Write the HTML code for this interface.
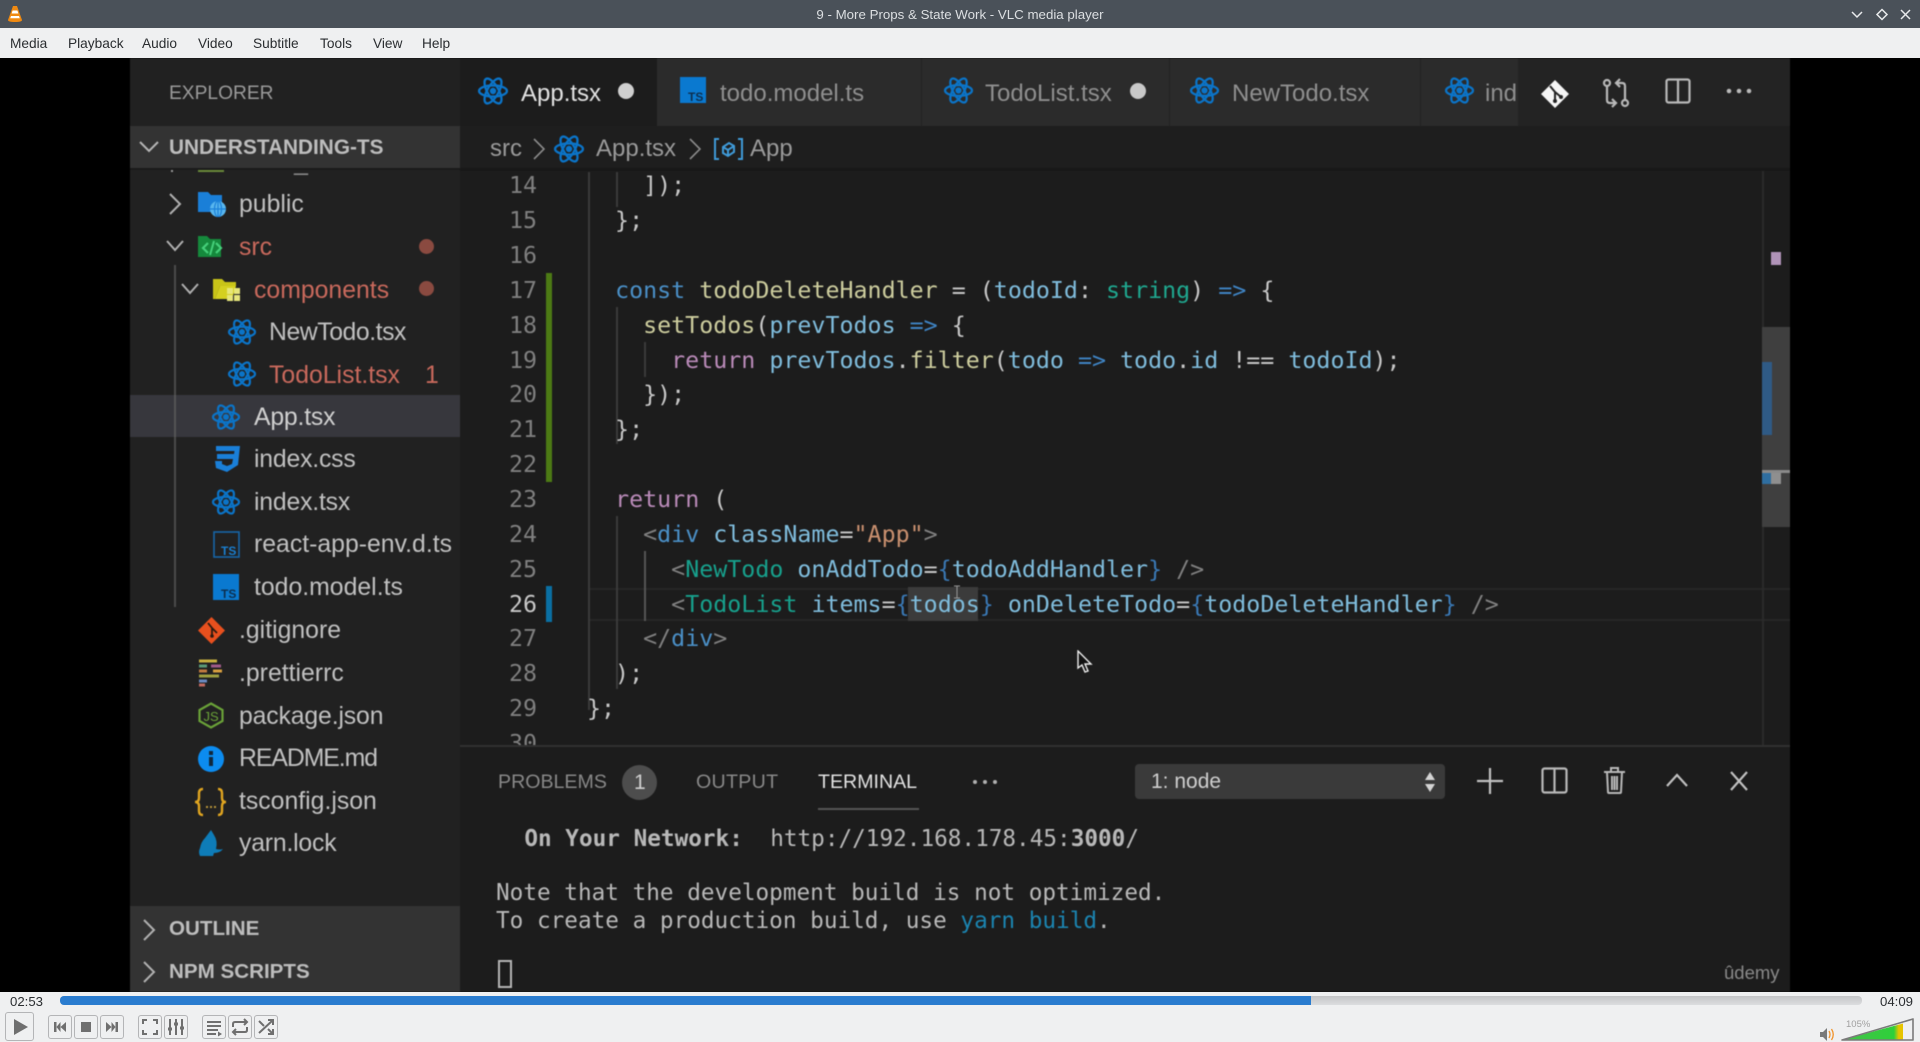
<!DOCTYPE html>
<html lang="en"><head><meta charset="utf-8"><title>9 - More Props &amp; State Work - VLC media player</title>
<style>
html,body{margin:0;padding:0;width:1920px;height:1042px;overflow:hidden;background:#eff0f1;font-family:"Liberation Sans",sans-serif}
div,span,svg{box-sizing:border-box}
.a,.t,.l,.n{position:absolute}
.t,.l,.n{white-space:pre;line-height:0}
#title{position:absolute;left:0;top:0;width:1920px;height:28px;background:#4a5159}
#menu{position:absolute;left:0;top:28px;width:1920px;height:30px;background:#eff0f1}
#menu .t{top:16px;font-size:13.7px;color:#2a2d30}
#video{position:absolute;left:0;top:58px;width:1920px;height:934px;background:#000;overflow:hidden}
#v{position:absolute;left:0;top:-58px;width:1920px;height:1042px;filter:blur(.55px)}
.s{font-size:24.8px;color:#c0c0c0}
.r{color:#c9695c}
.tab{font-size:24px;color:#8f8f8f}
.n{font:23.3px/0 "DejaVu Sans Mono",monospace;color:#7f7f7f;width:30px;left:507px;text-align:right}
.l{font:23.3px/0 "DejaVu Sans Mono",monospace;left:587px;color:#c8c8c8}
.k{color:#4a8fc6}.f{color:#cdcd9e}.p{color:#7fbcdc}.y{color:#1fa78f}.w{color:#3f84c4}.m{color:#b98ab8}
.g{color:#808080}.q{color:#17a08c}.b{color:#3a78b4}.o{color:#c9906f}
.ig{position:absolute;width:1.5px;background:#3a3a3a}
.term{font:22.7px/0 "DejaVu Sans Mono",monospace;color:#b8b8b8;left:496px}
.pan{font-size:19.6px;color:#888}
.btn{position:absolute;top:1015px;width:24px;height:24px;border:1px solid #b4b5b7;border-radius:3px;background:#eff0f1}
.btn svg{position:absolute;left:0;top:0;width:22px;height:22px}
</style></head><body>
<svg width="0" height="0" style="position:absolute"><defs>
<symbol id="re" viewBox="0 0 28 28"><g fill="none" stroke="#0b74c8" stroke-width="2.2"><ellipse cx="14" cy="14" rx="13" ry="5.2"/><ellipse cx="14" cy="14" rx="13" ry="5.2" transform="rotate(60 14 14)"/><ellipse cx="14" cy="14" rx="13" ry="5.2" transform="rotate(120 14 14)"/></g><circle cx="14" cy="14" r="3" fill="#0b74c8"/></symbol>
<symbol id="tsf" viewBox="0 0 26 26"><rect width="26" height="26" fill="#0a79d0"/><text x="8" y="24" font-family="Liberation Sans" font-size="12" font-weight="700" fill="#0d2f4f">TS</text></symbol>
</defs></svg>

<div id="title">
<svg class="a" style="left:7px;top:5px" width="16" height="18" viewBox="0 0 16 18"><path d="M6 1h4l5 14q0 2-7 2t-7-2z" fill="#f08a12"/><path d="M5.6 5.5h4.8l1 3H4.6zM4 11h8l.8 2.2H3.2z" fill="#fff"/></svg>
<span class="t" style="left:0;width:1920px;text-align:center;top:14.5px;font-size:13.3px;color:#dcdfe2">9 - More Props &amp; State Work - VLC media player</span>
<svg class="a" style="left:1850px;top:8px" width="66" height="13" viewBox="0 0 66 13" fill="none" stroke="#e8eaec" stroke-width="1.5"><path d="M2 4l5 5 5-5"/><path d="M32 1.5l5 5-5 5-5-5z"/><path d="M51 2l9 9M60 2l-9 9"/></svg>
</div>
<div id="menu">
<span class="t" style="left:10px">Media</span><span class="t" style="left:68px">Playback</span><span class="t" style="left:142px">Audio</span><span class="t" style="left:198px">Video</span><span class="t" style="left:253px">Subtitle</span><span class="t" style="left:320px">Tools</span><span class="t" style="left:373px">View</span><span class="t" style="left:422px">Help</span>
</div>

<div id="video"><div id="v">
<!-- backgrounds -->
<div class="a" style="left:130px;top:58px;width:1660px;height:934px;background:#1c1c1c"></div>
<div class="a" style="left:130px;top:58px;width:330px;height:934px;background:#212121"></div>
<div class="a" style="left:460px;top:58px;width:1330px;height:68px;background:#232323"></div>
<div class="a" style="left:460px;top:58px;width:197px;height:68px;background:#1c1c1c"></div>
<div class="a" style="left:657px;top:58px;width:264px;height:68px;background:#2b2b2b"></div>
<div class="a" style="left:922px;top:58px;width:247px;height:68px;background:#2b2b2b"></div>
<div class="a" style="left:1170px;top:58px;width:250px;height:68px;background:#2b2b2b"></div>
<div class="a" style="left:1421px;top:58px;width:97px;height:68px;background:#2b2b2b"></div>
<div class="a" style="left:460px;top:126px;width:1330px;height:43px;background:#1e1e1e"></div>
<div class="a" style="left:460px;top:168px;width:1330px;height:3px;background:#181818"></div>

<!-- explorer -->
<span class="t" style="left:169px;top:94px;font-size:19.2px;color:#9a9a9a">EXPLORER</span>
<div class="a" style="left:130px;top:169px;width:330px;height:7px;overflow:hidden">
<span class="t s" style="left:109px;top:-6px;color:#8a8a8a">node_modules</span>
<div class="a" style="left:68px;top:0;width:26px;height:3px;background:#6a8a3a"></div>
<div class="a" style="left:41px;top:0;width:2px;height:3px;background:#999"></div>
</div>
<div class="a" style="left:130px;top:126px;width:330px;height:42px;background:#333"></div>
<div class="a" style="left:130px;top:168px;width:330px;height:2px;background:#1a1a1a"></div>
<svg class="a" style="left:138px;top:139px" width="22" height="16" viewBox="0 0 22 16" fill="none" stroke="#b5b5b5" stroke-width="2"><path d="M2 3l9 9 9-9"/></svg>
<span class="t" style="left:169px;top:148px;font-size:20.8px;font-weight:700;color:#bdbdbd">UNDERSTANDING-TS</span>

<div class="a" style="left:174px;top:265px;width:1.5px;height:342px;background:#4a4a4a"></div>
<div class="a" style="left:130px;top:395px;width:330px;height:42px;background:#37373d"></div>
<div class="a" style="left:174px;top:395px;width:1.5px;height:42px;background:#555"></div>

<svg class="a" style="left:168px;top:192px" width="14" height="24" viewBox="0 0 14 24" fill="none" stroke="#b0b0b0" stroke-width="2"><path d="M2 2l10 10L2 22"/></svg>
<svg class="a" style="left:198px;top:191px" width="28" height="26" viewBox="0 0 28 26"><path d="M0 1h10l3 3h11v17H0z" fill="#1a7fd8"/><circle cx="20" cy="18" r="8" fill="#58b6ee"/><path d="M12 18h16M20 10v16" stroke="#1a7fd8" stroke-width="1.2"/><ellipse cx="20" cy="18" rx="3.5" ry="8" fill="none" stroke="#1a7fd8" stroke-width="1.2"/></svg>
<span class="t s" style="left:239px;top:205px">public</span>

<svg class="a" style="left:165px;top:239px" width="20" height="14" viewBox="0 0 20 14" fill="none" stroke="#b0b0b0" stroke-width="2"><path d="M2 2l8 9 8-9"/></svg>
<svg class="a" style="left:198px;top:235px" width="28" height="24" viewBox="0 0 28 24"><path d="M0 1h9l3 3h11v18H0z" fill="#15893c"/><path d="M10 18l-5-5 5-5M18 18l5-5-5-5" fill="none" stroke="#45d07a" stroke-width="2.2"/><path d="M16 6l-4 14" stroke="#45d07a" stroke-width="2"/></svg>
<span class="t s r" style="left:239px;top:248px">src</span>
<div class="a" style="left:419px;top:239px;width:15px;height:15px;border-radius:50%;background:#8a4a40"></div>

<svg class="a" style="left:180px;top:282px" width="20" height="14" viewBox="0 0 20 14" fill="none" stroke="#b0b0b0" stroke-width="2"><path d="M2 2l8 9 8-9"/></svg>
<svg class="a" style="left:213px;top:278px" width="29" height="24" viewBox="0 0 29 24"><path d="M0 1h9l3 3h11v4H7L2 21H0z" fill="#c8c418"/><path d="M7 8h16l-4 13H2z" fill="#d4d020"/><rect x="14" y="10" width="6" height="6" fill="#e6e67a"/><rect x="21" y="10" width="6" height="6" fill="#e6e67a"/><rect x="14" y="17" width="6" height="6" fill="#e6e67a"/><rect x="21" y="17" width="6" height="6" fill="#e6e67a"/></svg>
<span class="t s r" style="left:254px;top:291px">components</span>
<div class="a" style="left:419px;top:281px;width:15px;height:15px;border-radius:50%;background:#8a4a40"></div>

<svg class="a" style="left:228px;top:318px" width="28" height="28"><use href="#re"/></svg>
<span class="t s" style="left:269px;top:333px;letter-spacing:-.45px">NewTodo.tsx</span>
<svg class="a" style="left:228px;top:360px" width="28" height="28"><use href="#re"/></svg>
<span class="t s r" style="left:269px;top:376px">TodoList.tsx</span>
<span class="t s r" style="left:425px;top:376px">1</span>
<svg class="a" style="left:212px;top:403px" width="28" height="28"><use href="#re"/></svg>
<span class="t s" style="left:254px;top:418px;color:#d0d0d0;letter-spacing:-.2px">App.tsx</span>
<svg class="a" style="left:213px;top:446px" width="27" height="26" viewBox="0 0 27 26"><path d="M3 0h24l-2 19-11 7-11-4-1-7h7v3l5 2 5-2 1-5H4V8h17l.5-3H3z" fill="#1a7fd8"/></svg>
<span class="t s" style="left:254px;top:460px;letter-spacing:-.2px">index.css</span>
<svg class="a" style="left:212px;top:488px" width="28" height="28"><use href="#re"/></svg>
<span class="t s" style="left:254px;top:503px;letter-spacing:-.2px">index.tsx</span>
<svg class="a" style="left:213px;top:531px" width="27" height="27" viewBox="0 0 27 27"><rect x="1" y="1" width="25" height="25" fill="none" stroke="#1666a8" stroke-width="1.6"/><text x="8" y="24" font-family="Liberation Sans" font-size="12" font-weight="700" fill="#1a7fd0">TS</text></svg>
<span class="t s" style="left:254px;top:545px">react-app-env.d.ts</span>
<svg class="a" style="left:213px;top:574px" width="26" height="26"><use href="#tsf"/></svg>
<span class="t s" style="left:254px;top:588px">todo.model.ts</span>
<svg class="a" style="left:198px;top:617px" width="27" height="27" viewBox="0 0 27 27"><path d="M13.5 0L27 13.500 13.500 27 0 13.500z" fill="#e8501e"/><path d="M10 6l4 5v8M14 11l5 5" stroke="#2a1a10" stroke-width="1.8" fill="none"/><circle cx="14" cy="19" r="1.8" fill="#2a1a10"/></svg>
<span class="t s" style="left:239px;top:631px">.gitignore</span>
<svg class="a" style="left:199px;top:659px" width="25" height="28" viewBox="0 0 25 28"><g fill="none" stroke-width="3"><path d="M0 2h18" stroke="#c8b040"/><path d="M0 7h8" stroke="#5a9a78"/><path d="M12 7h10" stroke="#a05a8a"/><path d="M0 12h8" stroke="#c07a40"/><path d="M14 12h9" stroke="#d8a040"/><path d="M0 17h20" stroke="#a0a040"/><path d="M0 22h8" stroke="#6a8ac0"/><path d="M0 26h6" stroke="#c06a60"/></g></svg>
<span class="t s" style="left:239px;top:674px">.prettierrc</span>
<svg class="a" style="left:198px;top:702px" width="26" height="27" viewBox="0 0 26 27"><path d="M13 1.500L24.500 8v11L13 25.500 1.500 19V8z" fill="none" stroke="#6aa238" stroke-width="2.2"/><text x="5.5" y="19" font-family="Liberation Sans" font-size="13" fill="#6aa238">JS</text></svg>
<span class="t s" style="left:239px;top:717px;letter-spacing:-.15px">package.json</span>
<div class="a" style="left:198px;top:746px;width:26px;height:26px;border-radius:50%;background:#0c8cf0"></div>
<div class="a" style="left:209px;top:751px;width:4px;height:4px;background:#10283c"></div>
<div class="a" style="left:209px;top:757px;width:4px;height:9px;background:#10283c"></div>
<span class="t s" style="left:239px;top:759px;letter-spacing:-1.05px">README.md</span>
<svg class="a" style="left:194px;top:787px" width="33" height="30" viewBox="0 0 33 30" fill="none" stroke="#e0a520" stroke-width="2.4"><path d="M9 2Q5 2 5 6v5q0 4-4 4 4 0 4 4v5q0 4 4 4M24 2q4 0 4 4v5q0 4 4 4-4 0-4 4v5q0 4-4 4"/><path d="M12 20h2M16 20h2M20 20h2" stroke="#b8963a" stroke-width="2"/></svg>
<span class="t s" style="left:239px;top:802px">tsconfig.json</span>
<svg class="a" style="left:198px;top:830px" width="26" height="28" viewBox="0 0 26 28"><path d="M13 0l3 5q4 6 2 14 4 1 7 0-3 4-9 4l-1 3H2q-2-4 0-8 1-6 5-10z" fill="#0e7cb8"/></svg>
<span class="t s" style="left:239px;top:844px;letter-spacing:-.2px">yarn.lock</span>

<div class="a" style="left:130px;top:906px;width:330px;height:86px;background:#333"></div>
<svg class="a" style="left:142px;top:918px" width="14" height="24" viewBox="0 0 14 24" fill="none" stroke="#b0b0b0" stroke-width="2"><path d="M2 2l10 10L2 22"/></svg>
<span class="t" style="left:169px;top:929px;font-size:20.6px;font-weight:700;color:#bdbdbd">OUTLINE</span>
<svg class="a" style="left:142px;top:960px" width="14" height="24" viewBox="0 0 14 24" fill="none" stroke="#b0b0b0" stroke-width="2"><path d="M2 2l10 10L2 22"/></svg>
<span class="t" style="left:169px;top:972px;font-size:20.6px;font-weight:700;color:#bdbdbd">NPM SCRIPTS</span>

<!-- tabs -->
<svg class="a" style="left:478px;top:76px" width="30" height="30"><use href="#re"/></svg>
<span class="t tab" style="left:521px;top:94px;color:#e2e2e2">App.tsx</span>
<div class="a" style="left:618px;top:83px;width:16px;height:16px;border-radius:50%;background:#cfcfcf"></div>
<svg class="a" style="left:680px;top:77px" width="26" height="26"><use href="#tsf"/></svg>
<span class="t tab" style="left:720px;top:94px">todo.model.ts</span>
<svg class="a" style="left:944px;top:76px" width="29" height="29"><use href="#re"/></svg>
<span class="t tab" style="left:985px;top:94px">TodoList.tsx</span>
<div class="a" style="left:1130px;top:83px;width:16px;height:16px;border-radius:50%;background:#c8c8c8"></div>
<svg class="a" style="left:1190px;top:76px" width="29" height="29"><use href="#re"/></svg>
<span class="t tab" style="left:1232px;top:94px">NewTodo.tsx</span>
<svg class="a" style="left:1445px;top:76px" width="29" height="29"><use href="#re"/></svg>
<div class="a" style="left:1480px;top:70px;width:38px;height:46px;overflow:hidden"><span class="t tab" style="left:5px;top:24px">ind</span></div>

<svg class="a" style="left:1541px;top:80px" width="28" height="28" viewBox="0 0 28 28"><path d="M14 0l14 14-14 14L0 14z" fill="#f5f5f5"/><path d="M9 6l5 6v9M14 12l6 5" stroke="#222" stroke-width="2" fill="none"/><circle cx="14" cy="21" r="2" fill="#222"/><circle cx="20" cy="17" r="2" fill="#222"/></svg>
<svg class="a" style="left:1602px;top:78px" width="28" height="30" viewBox="0 0 28 30" fill="none" stroke="#b8b8b8" stroke-width="2.2"><circle cx="5" cy="5" r="3"/><path d="M5 8v14q0 3 3 3h5M10 21l4 4-4 4"/><circle cx="23" cy="25" r="3"/><path d="M23 22V8q0-3-3-3h-5M18 1l-4 4 4 4"/></svg>
<svg class="a" style="left:1665px;top:78px" width="26" height="26" viewBox="0 0 26 26" fill="none" stroke="#b8b8b8" stroke-width="2.2"><rect x="1.5" y="1.5" width="23" height="23" rx="2"/><path d="M13 2v22"/></svg>
<svg class="a" style="left:1726px;top:88px" width="26" height="6" viewBox="0 0 26 6" fill="#b8b8b8"><circle cx="3" cy="3" r="2.3"/><circle cx="13" cy="3" r="2.3"/><circle cx="23" cy="3" r="2.3"/></svg>

<!-- breadcrumb -->
<span class="t s" style="left:490px;top:149px;font-size:24px;color:#9a9a9a">src</span>
<svg class="a" style="left:533px;top:137px" width="12" height="24" viewBox="0 0 12 24" fill="none" stroke="#8a8a8a" stroke-width="1.6"><path d="M1 2l10 10L1 22"/></svg>
<svg class="a" style="left:554px;top:134px" width="30" height="30"><use href="#re"/></svg>
<span class="t s" style="left:596px;top:149px;font-size:24px;color:#9a9a9a">App.tsx</span>
<svg class="a" style="left:689px;top:137px" width="12" height="24" viewBox="0 0 12 24" fill="none" stroke="#8a8a8a" stroke-width="1.6"><path d="M1 2l10 10L1 22"/></svg>
<svg class="a" style="left:714px;top:138px" width="29" height="22" viewBox="0 0 29 22" fill="none" stroke="#3f9ad8" stroke-width="2"><path d="M5 1H1v20h4M24 1h4v20h-4"/><path d="M9 9l6-4 5 3v6l-6 4-5-3z"/><path d="M9 9l5 3 6-4M14 12v6"/></svg>
<span class="t s" style="left:750px;top:149px;font-size:24px;color:#9a9a9a">App</span>

<!-- editor -->
<div class="a" style="left:0;top:0;width:1920px;height:1042px;clip-path:inset(171px 0 297px 0)">
<div class="a" style="left:590px;top:588px;width:1200px;height:33px;border-top:2px solid #272727;border-bottom:2px solid #272727"></div>
<div class="ig" style="left:588px;top:172px;height:538px"></div>
<div class="ig" style="left:616px;top:172px;height:35px"></div>
<div class="ig" style="left:616px;top:307px;height:137px"></div>
<div class="ig" style="left:616px;top:516px;height:173px"></div>
<div class="ig" style="left:644px;top:342px;height:35px"></div>
<div class="ig" style="left:644px;top:551px;height:70px;background:#555"></div>
<div class="a" style="left:908px;top:587px;width:70px;height:34px;background:#3b3b3b"></div>
<div class="a" style="left:546px;top:273px;width:6px;height:209px;background:#4c7a14"></div>
<div class="a" style="left:546px;top:586px;width:6px;height:36px;background:#0a6fa3"></div>

<span class="n" style="top:186px">14</span><span class="n" style="top:221px">15</span><span class="n" style="top:256px">16</span><span class="n" style="top:291px">17</span><span class="n" style="top:326px">18</span><span class="n" style="top:361px">19</span><span class="n" style="top:395px">20</span><span class="n" style="top:430px">21</span><span class="n" style="top:465px">22</span><span class="n" style="top:500px">23</span><span class="n" style="top:535px">24</span><span class="n" style="top:570px">25</span><span class="n" style="top:605px;color:#c8c8c8">26</span><span class="n" style="top:639px">27</span><span class="n" style="top:674px">28</span><span class="n" style="top:709px">29</span><span class="n" style="top:744px">30</span>

<span class="l" style="top:186px">    ]);</span>
<span class="l" style="top:221px">  };</span>
<span class="l" style="top:291px">  <span class="k">const</span> <span class="f">todoDeleteHandler</span> = (<span class="p">todoId</span>: <span class="y">string</span>) <span class="w">=&gt;</span> {</span>
<span class="l" style="top:326px">    <span class="f">setTodos</span>(<span class="p">prevTodos</span> <span class="w">=&gt;</span> {</span>
<span class="l" style="top:361px">      <span class="m">return</span> <span class="p">prevTodos</span>.<span class="f">filter</span>(<span class="p">todo</span> <span class="w">=&gt;</span> <span class="p">todo</span>.<span class="p">id</span> !== <span class="p">todoId</span>);</span>
<span class="l" style="top:395px">    });</span>
<span class="l" style="top:430px">  };</span>
<span class="l" style="top:500px">  <span class="m">return</span> (</span>
<span class="l" style="top:535px">    <span class="g">&lt;</span><span class="k">div</span> <span class="p">className</span>=<span class="o">"App"</span><span class="g">&gt;</span></span>
<span class="l" style="top:570px">      <span class="g">&lt;</span><span class="q">NewTodo</span> <span class="p">onAddTodo</span>=<span class="b">{</span><span class="p">todoAddHandler</span><span class="b">}</span> <span class="g">/&gt;</span></span>
<span class="l" style="top:605px">      <span class="g">&lt;</span><span class="q">TodoList</span> <span class="p">items</span>=<span class="b">{</span><span class="p">todos</span><span class="b">}</span> <span class="p">onDeleteTodo</span>=<span class="b">{</span><span class="p">todoDeleteHandler</span><span class="b">}</span> <span class="g">/&gt;</span></span>
<span class="l" style="top:639px">    <span class="g">&lt;/</span><span class="k">div</span><span class="g">&gt;</span></span>
<span class="l" style="top:674px">  );</span>
<span class="l" style="top:709px">};</span>
</div>

<div class="a" style="left:1762px;top:171px;width:1.5px;height:574px;background:#2a2a2a"></div>
<div class="a" style="left:1762px;top:327px;width:28px;height:200px;background:#3f3f3f"></div>
<div class="a" style="left:1762px;top:362px;width:10px;height:73px;background:#2f5a85"></div>
<div class="a" style="left:1771px;top:252px;width:10px;height:13px;background:#b093b8"></div>
<div class="a" style="left:1762px;top:470px;width:28px;height:3px;background:#8a8a8a"></div>
<div class="a" style="left:1762px;top:473px;width:9px;height:11px;background:#2f6ea0"></div>
<div class="a" style="left:1771px;top:473px;width:10px;height:11px;background:#8f8f8f"></div>

<!-- mouse cursors -->
<svg class="a" style="left:950px;top:585px" width="14" height="14" viewBox="0 0 14 14" fill="none" stroke="#9a9a9a" stroke-width="1"><path d="M4 1h6M7 1v12M4 13h6"/></svg>
<svg class="a" style="left:1077px;top:650px" width="16" height="24" viewBox="0 0 16 24"><path d="M1 1v17l4-3 3 7 3-1-3-7h6z" fill="#111" stroke="#eee" stroke-width="1.4"/></svg>

<!-- panel -->
<div class="a" style="left:460px;top:745px;width:1330px;height:2px;background:#303030"></div>
<span class="t pan" style="left:498px;top:782px">PROBLEMS</span>
<div class="a" style="left:622px;top:765px;width:35px;height:35px;border-radius:50%;background:#4d4d4d"></div>
<span class="t" style="left:634px;top:783px;font-size:21px;color:#d0d0d0">1</span>
<span class="t pan" style="left:696px;top:782px;letter-spacing:.3px">OUTPUT</span>
<span class="t pan" style="left:818px;top:782px;color:#e2e2e2">TERMINAL</span>
<div class="a" style="left:818px;top:808px;width:101px;height:2px;background:#555"></div>
<svg class="a" style="left:972px;top:779px" width="26" height="6" viewBox="0 0 26 6" fill="#b0b0b0"><circle cx="3" cy="3" r="2"/><circle cx="13" cy="3" r="2"/><circle cx="23" cy="3" r="2"/></svg>
<div class="a" style="left:1135px;top:764px;width:310px;height:35px;background:#3a3a3a;border-radius:4px"></div>
<span class="t" style="left:1151px;top:782px;font-size:21px;color:#cfcfcf">1: node</span>
<svg class="a" style="left:1424px;top:770px" width="12" height="24" viewBox="0 0 12 24" fill="#d4d4d4"><path d="M6 2l5 8H1zM6 22l-5-8h10z"/></svg>
<svg class="a" style="left:1476px;top:767px" width="28" height="28" viewBox="0 0 28 28" stroke="#c0c0c0" stroke-width="2.2"><path d="M1 14h26M14 1v26"/></svg>
<svg class="a" style="left:1541px;top:767px" width="27" height="27" viewBox="0 0 27 27" fill="none" stroke="#b8b8b8" stroke-width="2.2"><rect x="1.5" y="1.5" width="24" height="24" rx="2"/><path d="M13.5 2v23"/></svg>
<svg class="a" style="left:1603px;top:766px" width="23" height="28" viewBox="0 0 23 28" fill="none" stroke="#b8b8b8" stroke-width="2"><path d="M1 6h21M8 6V2h7v4M4 6l1 20q0 1 1 1h11q1 0 1-1l1-20M9 10v14M11.5 10v14M14 10v14"/></svg>
<svg class="a" style="left:1666px;top:773px" width="22" height="14" viewBox="0 0 22 14" fill="none" stroke="#c0c0c0" stroke-width="2.2"><path d="M1 13L11 2l10 11"/></svg>
<svg class="a" style="left:1730px;top:771px" width="18" height="20" viewBox="0 0 18 20" fill="none" stroke="#c0c0c0" stroke-width="2.2"><path d="M1 1l16 18M17 1L1 19"/></svg>

<span class="t term" style="top:839px;left:497px">  <b>On Your Network:</b>  http://192.168.178.45:<b>3000</b>/</span>
<span class="t term" style="top:893px">Note that the development build is not optimized.</span>
<span class="t term" style="top:921px">To create a production build, use <span style="color:#1b84b0">yarn build</span>.</span>
<div class="a" style="left:498px;top:960px;width:14px;height:28px;border:2px solid #b5b5b5"></div>
<span class="t" style="left:1724px;top:973px;font-size:18.5px;color:#8a8a8a">ûdemy</span>
</div></div>

<!-- controls -->
<span class="t" style="left:10px;top:1002px;font-size:13.2px;color:#2a2d30">02:53</span>
<span class="t" style="left:1880px;top:1002px;font-size:13.2px;color:#2a2d30">04:09</span>
<div class="a" style="left:60px;top:996px;width:1802px;height:9px;border-radius:4px;background:linear-gradient(#c4c5c7,#dcdddf)"></div>
<div class="a" style="left:60px;top:996px;width:1251px;height:9px;border-radius:4px 0 0 4px;background:#2a7ccf"></div>

<div class="a" style="left:5px;top:1012px;width:29px;height:29px;border:1px solid #b4b5b7;border-radius:3px"><svg class="a" style="left:7px;top:6px" width="15" height="16" viewBox="0 0 15 16"><path d="M1 0l14 8-14 8z" fill="#6f6f6f"/></svg></div>
<div class="btn" style="left:48px"><svg viewBox="0 0 22 22" fill="#6f6f6f"><path d="M5 6h2.500v10H5zM11.500 6v10l-4-5zM17 6v10l-5.500-5z"/></svg></div>
<div class="btn" style="left:74px"><svg viewBox="0 0 22 22" fill="#6f6f6f"><rect x="6" y="6" width="10" height="10"/></svg></div>
<div class="btn" style="left:100px"><svg viewBox="0 0 22 22" fill="#6f6f6f"><path d="M17 6h-2.500v10H17zM10.500 6v10l4-5zM5 6v10l5.500-5z"/></svg></div>
<div class="btn" style="left:138px"><svg viewBox="0 0 22 22" fill="none" stroke="#6f6f6f" stroke-width="2"><path d="M4 8V4h4M14 4h4v4M18 14v4h-4M8 18H4v-4"/></svg></div>
<div class="btn" style="left:164px"><svg viewBox="0 0 22 22" fill="none" stroke="#6f6f6f" stroke-width="2"><path d="M5 3v16M11 3v16M17 3v16"/><path d="M3 13h4M9 8h4M15 12h4" stroke-width="3"/></svg></div>
<div class="btn" style="left:202px"><svg viewBox="0 0 22 22" fill="#6f6f6f"><path d="M4 5h14v2H4zM4 9h14v2H4zM4 13h11v2H4zM4 17h9v2H4z"/><path d="M15 15.500l4 2.500-4 2.500z"/></svg></div>
<div class="btn" style="left:228px"><svg viewBox="0 0 22 22" fill="none" stroke="#6f6f6f" stroke-width="2"><path d="M4 11V8q0-2 2-2h11M15 3l3 3-3 3M18 11v3q0 2-2 2H5M7 13l-3 3 3 3"/></svg></div>
<div class="btn" style="left:254px"><svg viewBox="0 0 22 22" fill="none" stroke="#6f6f6f" stroke-width="2"><path d="M4 5l5 5M4 17L17 5M13 13l4 4"/><path d="M13 4h5v5M18 13v5h-5" stroke-width="2"/></svg></div>

<svg class="a" style="left:1819px;top:1027px" width="17" height="15" viewBox="0 0 17 15"><path d="M1 5h3l4-4v13l-4-4H1z" fill="#7a7a7a"/><path d="M10 4q2 3.500 0 7M12.500 2q3.500 5.500 0 11" fill="none" stroke="#f0932b" stroke-width="1.3"/></svg>
<svg class="a" style="left:1840px;top:1018px" width="75" height="24" viewBox="0 0 75 24"><defs><linearGradient id="vg" x1="0" x2="1" y1="0" y2="0"><stop offset="0" stop-color="#45c04a"/><stop offset=".85" stop-color="#2ed03a"/><stop offset=".93" stop-color="#e6c400"/><stop offset="1" stop-color="#e6c400"/></linearGradient></defs><path d="M2 22L63 5.500V22z" fill="url(#vg)"/><path d="M2 22L73 1v21z" fill="none" stroke="#7a7a7a" stroke-width="1.6" stroke-linejoin="round"/></svg>
<span class="t" style="left:1846px;top:1025px;font-size:9.500px;color:#a0a0a0">105%</span>
</body></html>
